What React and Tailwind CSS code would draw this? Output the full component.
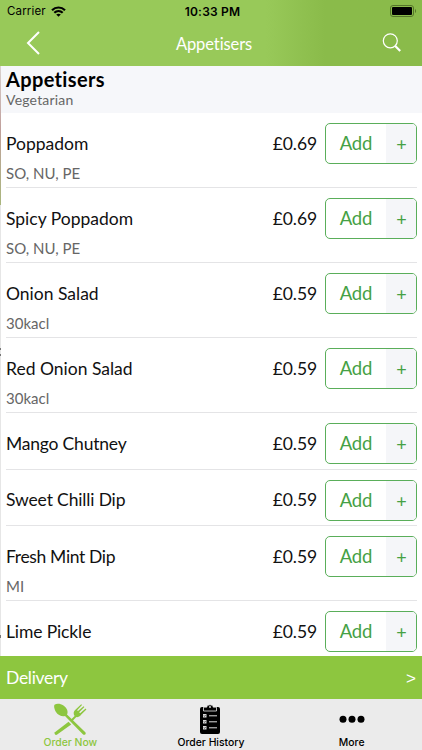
const items = [
  { name: "Poppadom", price: "£0.69", note: "SO, NU, PE", spacing: "tracking-normal" },
  { name: "Spicy Poppadom", price: "£0.69", note: "SO, NU, PE", spacing: "tracking-normal" },
  { name: "Onion Salad", price: "£0.59", note: "30kacl", spacing: "tracking-normal" },
  { name: "Red Onion Salad", price: "£0.59", note: "30kacl", spacing: "tracking-normal" },
  { name: "Mango Chutney", price: "£0.59", spacing: "tracking-[-0.2px]" },
  { name: "Sweet Chilli Dip", price: "£0.59", spacing: "tracking-[-0.15px]" },
  { name: "Fresh Mint Dip", price: "£0.59", note: "MI", spacing: "tracking-[-0.35px]" },
  { name: "Lime Pickle", price: "£0.59", spacing: "tracking-[-0.12px]" },
];

function StatusBar() {
  return (
    <div className="h-[22px] pl-[7px] pr-[5px] grid grid-cols-3 items-center font-['Inter',sans-serif] text-black">
      <div className="pt-[2px] flex items-center gap-[5px] text-[11.5px] tracking-[0.15px]">
        Carrier
        <svg className="-mt-[2px]" width="15" height="11" viewBox="0 0 15 11" fill="none" stroke="#000" strokeWidth="2.2">
          <path d="M1 4.2C4.7.6 10.3.6 14 4.2" />
          <path d="M3.3 6.8c2.4-2.3 6-2.3 8.4 0" />
          <path d="M7.5 10.8 5.2 8.6c1.3-1.2 3.3-1.2 4.6 0z" fill="#000" stroke="none" />
        </svg>
      </div>
      <div className="pl-px pt-px text-center text-[12px] font-semibold tracking-[0.2px]">10:33 PM</div>
      <svg className="justify-self-end" width="27" height="12" viewBox="0 0 27 12">
        <rect x="0.5" y="0.5" width="23" height="11" rx="2.5" fill="none" stroke="#55752a" />
        <rect x="2" y="2" width="20" height="8" rx="1" fill="#000" />
        <path d="M25 4v4c1.4-.6 1.4-3.4 0-4z" fill="#55752a" />
      </svg>
    </div>
  );
}

function MenuItem({ item }) {
  return (
    <div
      className={`${item.note ? "h-[75px]" : "h-[56.5px]"} shrink-0 ml-[5px] mr-[5px] pt-[10px] border-b border-[#e4e4e6]`}
    >
      <div className="flex items-center h-[41px]">
        <div className={`flex-1 pt-px text-[17.5px] text-[#111] ${item.spacing}`}>{item.name}</div>
        <div className="pt-px text-[17.5px] tracking-[-0.1px] text-[#111] mr-[8px]">{item.price}</div>
        <button className="w-[92px] h-[41px] flex rounded-[5px] border border-[#5aae5a] overflow-hidden text-[#45a145]">
          <span className="flex-1 h-full flex items-center justify-center pt-px text-[18.5px] tracking-[-0.1px]">Add</span>
          <span className="w-[30px] h-full flex items-center justify-center pt-[2px] pl-px bg-[#f5f6f9] text-[18px]">+</span>
        </button>
      </div>
      {item.note && <div className="text-[15px] leading-[18px] text-[#666]">{item.note}</div>}
    </div>
  );
}

// sliver of the previous screen still showing at the left
function BackEdge() {
  return (
    <div className="w-px shrink-0 flex flex-col bg-[#e6e6e6]">
      <div className="h-[139px] bg-linear-to-b from-[#d9d2cf] via-[#c0a09c] via-45% to-[#a9b67c]" />
      <div className="mt-[143px] h-[2px] bg-[#777]" />
      <div className="mt-[4px] h-[2px] bg-[#777]" />
      <div className="mt-[279px] h-[3px] bg-[#777]" />
    </div>
  );
}

function CutleryIcon() {
  return (
    <svg className="mt-[4px]" width="34" height="33" viewBox="0 0 34 33" fill="currentColor">
      <path d="M1.5 1.8C5-1 12.5 2 14.2 7c.6 2 .4 3.3-.2 4.5L32.3 29.2c1.4 1.4-.8 3.6-2.2 2.2L12 13c-3 .8-7.2-.7-9.2-4.200C1.5 6.3.6 3.6 1.5 1.8z" />
      <path d="m15.6 18.8 2.6 2.6L4.2 31.600c-1.600 1.100-3.500-.9-2.300-2.400z" />
      <path d="M17.3 17.3 21.6 13c-1.6-2.7-1-4.5.8-6.3l5.8-5.500.8.7-4.900 5.300.9.8 5.600-4.800.8.8-5.200 5.300.9.9 5.500-4.600.8.8-5.100 5.200c-1.500 2-3.300 2.700-5 2.500l-4.500 4.700z" />
    </svg>
  );
}

function ClipboardIcon() {
  return (
    <svg className="mt-[4px] -ml-px" width="20" height="33" viewBox="0 0 20 33">
      <rect x="0" y="4" width="20" height="27" rx="2" fill="#000" />
      <path d="M3.5 8V4.2h3.3C7 1 13 1 13.2 4.2h3.3V8z" fill="#000" stroke="#ebebeb" strokeWidth="0.8" />
      <circle cx="10" cy="4" r="0.9" fill="#ebebeb" />
      <path d="M3 11h3.5v3.5H3zM3 17h3.5v3.5H3zM3 23h3.5v3.5H3z" fill="#ddd" />
      <path d="m3.8 12.6.7.8 1.2-1.5M3.8 18.6l.7.8 1.2-1.5M3.8 24.6l.7.8 1.2-1.5" fill="none" stroke="#000" strokeWidth="0.6" />
      <path d="M9 12.8h8M9 18.8h8M9 24.8h8" stroke="#ddd" strokeWidth="1" />
    </svg>
  );
}

export default function App() {
  return (
    <div className="w-[422px] h-[750px] flex flex-col overflow-hidden bg-white font-['Lato',sans-serif]">
      <header className="h-[66px] shrink-0 bg-linear-to-r from-[#98c959] from-63% to-[#8abb4a] to-77%">
        <StatusBar />
        <div className="h-[44px] pl-[26px] pr-[20px] grid grid-cols-3 items-center text-white">
          <svg className="-mt-[2px]" width="15" height="24" viewBox="0 0 15 24" fill="none" stroke="#fff" strokeWidth="2">
            <path d="M13 1 2 12l11 11" />
          </svg>
          <div className="text-center text-[16.5px] tracking-[-0.1px]">Appetisers</div>
          <svg className="-mt-[2px] justify-self-end" width="20" height="20" viewBox="0 0 20 20" fill="none" stroke="#fff">
            <circle cx="8.3" cy="7.8" r="7" strokeWidth="1.2" />
            <path d="m13.2 13 5 5" strokeWidth="2.2" />
          </svg>
        </div>
      </header>

      <main className="flex-1 min-h-0 overflow-hidden flex">
        <BackEdge />
        <div className="flex-1 flex flex-col">
          <div className="h-[47px] shrink-0 bg-[#f6f7fa] pl-[5px] pt-px">
            <h1 className="text-[20px] leading-[24px] font-bold tracking-[0.35px] text-black">Appetisers</h1>
            <p className="text-[14px] leading-[17px] tracking-[0.2px] text-[#666]">Vegetarian</p>
          </div>
          {items.map((item) => (
            <MenuItem key={item.name} item={item} />
          ))}
        </div>
      </main>

      <button className="h-[43px] shrink-0 px-[6px] flex items-center justify-between bg-[#8dc63f] text-white">
        <span className="pt-px text-[17.5px] tracking-[-0.3px]">Delivery</span>
        <span className="pt-[2px] font-['Liberation_Sans',sans-serif] text-[17px]">&gt;</span>
      </button>

      <nav className="h-[51px] shrink-0 grid grid-cols-3 bg-[#ebebeb] font-['Inter',sans-serif] text-[10.4px] leading-[14px] font-medium text-black">
        <div className="flex flex-col items-center text-[#8dc63f]">
          <CutleryIcon />
          Order Now
        </div>
        <div className="flex flex-col items-center">
          <ClipboardIcon />
          Order History
        </div>
        <div className="flex flex-col items-center">
          <svg className="mt-[4px]" width="26" height="33" viewBox="0 0 26 33">
            <circle cx="4" cy="16.3" r="3.5" />
            <circle cx="13" cy="16.3" r="3.5" />
            <circle cx="22" cy="16.3" r="3.5" />
          </svg>
          More
        </div>
      </nav>
    </div>
  );
}
